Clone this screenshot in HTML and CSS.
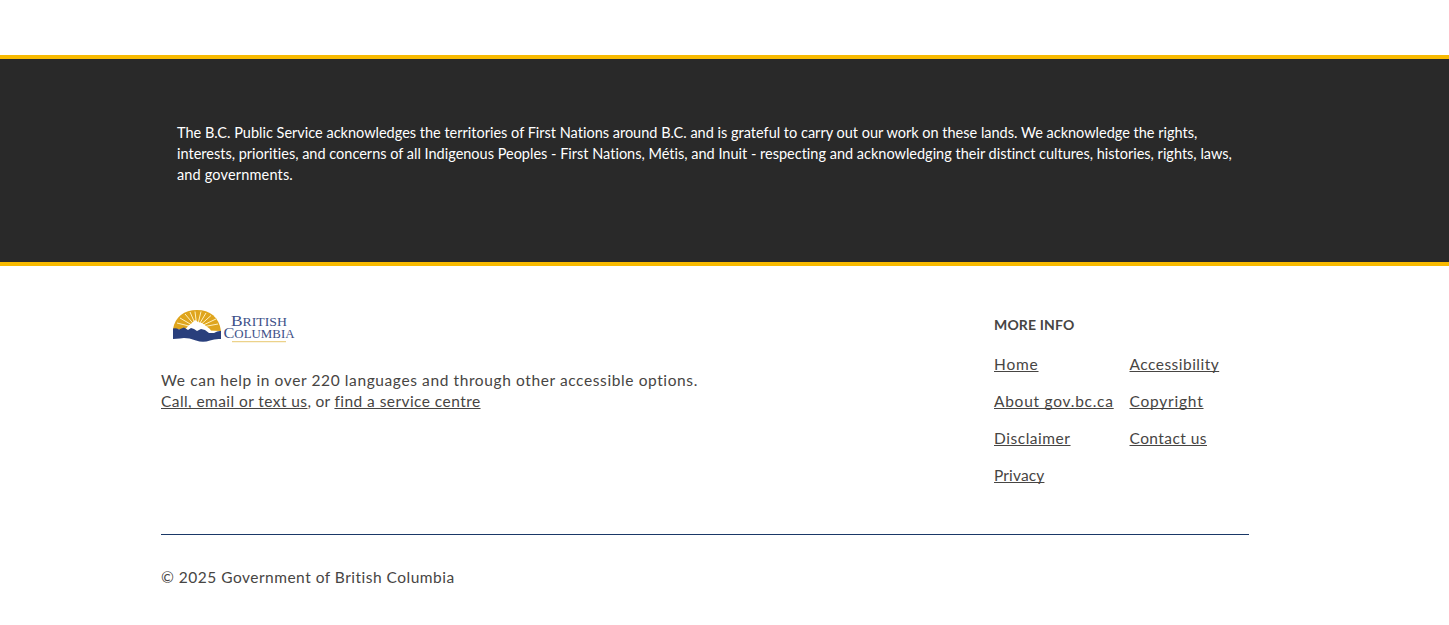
FILE: index.html
```
<!DOCTYPE html>
<html lang="en">
<head>
<meta charset="utf-8">
<title>Government of British Columbia</title>
<link rel="stylesheet" href="styles.css">
</head>
<body>
<section class="acknowledgement">
  <p class="statement">
    <span class="line">The B.C. Public Service acknowledges the territories of First Nations around B.C. and is grateful to carry out our work on these lands. We acknowledge the rights,</span>
    <span class="line">interests, priorities, and concerns of all Indigenous Peoples - First Nations, Métis, and Inuit - respecting and acknowledging their distinct cultures, histories, rights, laws,</span>
    <span class="line line-last">and governments.</span>
  </p>
</section>
<footer class="footer">
  <div class="top">
    <div class="contact">
      <svg class="logo" viewBox="0 0 122 34" role="img" aria-label="British Columbia">
        <path fill="#dfa51d" d="M0 20C2 8 11 1 24 1S46 8 48 22Z"/>
        <path fill="none" stroke="#fff0bd" stroke-width="1" d="M24 19L4 14M24 19L7 9M24 19L12 5M24 19L17 3M24 19L22 2.5M24 19L28 2.5M24 19L33 4M24 19L38 6.5M24 19L43 10M24 19L45 15"/>
        <path fill="#fff" d="M11 22L15 17 19 14 22 11 25 13 29 14 33 17 37 20 39 24Z"/>
        <path fill="#293f7c" d="M0 19.500Q3 18.500 6 20.500L11 18.500 15 21 18 19 21 20 24 22 28 20 32 21 36 24 41 24Q45 21.500 48 22V30Q42 29.500 37 31.500 30 34 23 31.500 13 28 7 29.500L0 30Z"/>
        <g fill="#3d5088" font-family="Liberation Serif, serif">
          <text x="58" y="16.500" font-size="14.500" textLength="56" lengthAdjust="spacingAndGlyphs">B<tspan font-size="11.500">RITISH</tspan></text>
          <text x="50.500" y="28.500" font-size="14.500" textLength="71" lengthAdjust="spacingAndGlyphs">C<tspan font-size="11.500">OLUMBIA</tspan></text>
        </g>
        <path fill="#ecd28a" d="M59 32h54v1.300H59z"/>
      </svg>
      <p class="help"><span class="intro">We can help in over 220 languages and through other accessible options.</span><br><a class="reach" href="#">Call, email or text us</a><span class="joiner">, or </span><a class="centre" href="#">find a service centre</a></p>
    </div>
    <nav class="more">
      <h2 class="heading">More info</h2>
      <ul class="links">
        <li><a class="home" href="#">Home</a></li>
        <li><a class="about" href="#">About gov.bc.ca</a></li>
        <li><a class="disclaimer" href="#">Disclaimer</a></li>
        <li><a class="privacy" href="#">Privacy</a></li>
        <li><a class="accessibility" href="#">Accessibility</a></li>
        <li><a class="rights" href="#">Copyright</a></li>
        <li><a class="contact-us" href="#">Contact us</a></li>
      </ul>
    </nav>
  </div>
  <p class="copyright">© 2025 Government of British Columbia</p>
</footer>
</body>
</html>
```
FILE: styles.css
```
* { box-sizing: border-box; }
body { margin: 0; padding-top: 55px; background: #fff; color: #474543; font-family: Lato, "Noto Sans", sans-serif; font-variant-ligatures: none; }
p, h2, ul { margin: 0; padding: 0; }
.acknowledgement { height: 211px; padding: 63px 177px 0; background: #292929; border-top: 4px solid #f8ba00; border-bottom: 4px solid #f8ba00; color: #fff; }
.statement { font-size: 14.5px; line-height: 21px; }
.line { display: block; width: max-content; white-space: nowrap; }
.line-last { letter-spacing: .16px; }
.footer { width: 1088px; margin-left: 161px; }
.top { display: flex; justify-content: space-between; height: 269px; padding-top: 43px; border-bottom: 1px solid #1a3867; }
.logo { display: block; width: 122px; height: 34px; margin-left: 12px; }
.help { margin-top: 27px; font-size: 15.5px; line-height: 21px; white-space: nowrap; }
.intro { letter-spacing: .605px; }
.reach { letter-spacing: .427px; }
.joiner { letter-spacing: .27px; }
.centre { letter-spacing: .44px; }
a { color: inherit; text-decoration: underline; text-decoration-thickness: 1px; text-underline-offset: 1px; text-decoration-skip-ink: none; }
.more { width: 255px; padding-top: 5px; }
.heading { font-size: 14px; line-height: 21px; font-weight: 700; letter-spacing: .15px; text-transform: uppercase; }
.links { display: grid; grid-template-rows: repeat(4, 21px); grid-auto-flow: column; grid-template-columns: 119.5px max-content; gap: 16px; margin-top: 19px; list-style: none; font-size: 15.5px; line-height: 21px; white-space: nowrap; }
.home { letter-spacing: .8px; }
.about { letter-spacing: .74px; }
.disclaimer { letter-spacing: .54px; }
.privacy { letter-spacing: .14px; }
.accessibility { letter-spacing: .48px; }
.rights { letter-spacing: .78px; }
.contact-us { letter-spacing: .44px; }
.copyright { margin-top: 32px; font-size: 15.5px; line-height: 21px; letter-spacing: .49px; }
```
